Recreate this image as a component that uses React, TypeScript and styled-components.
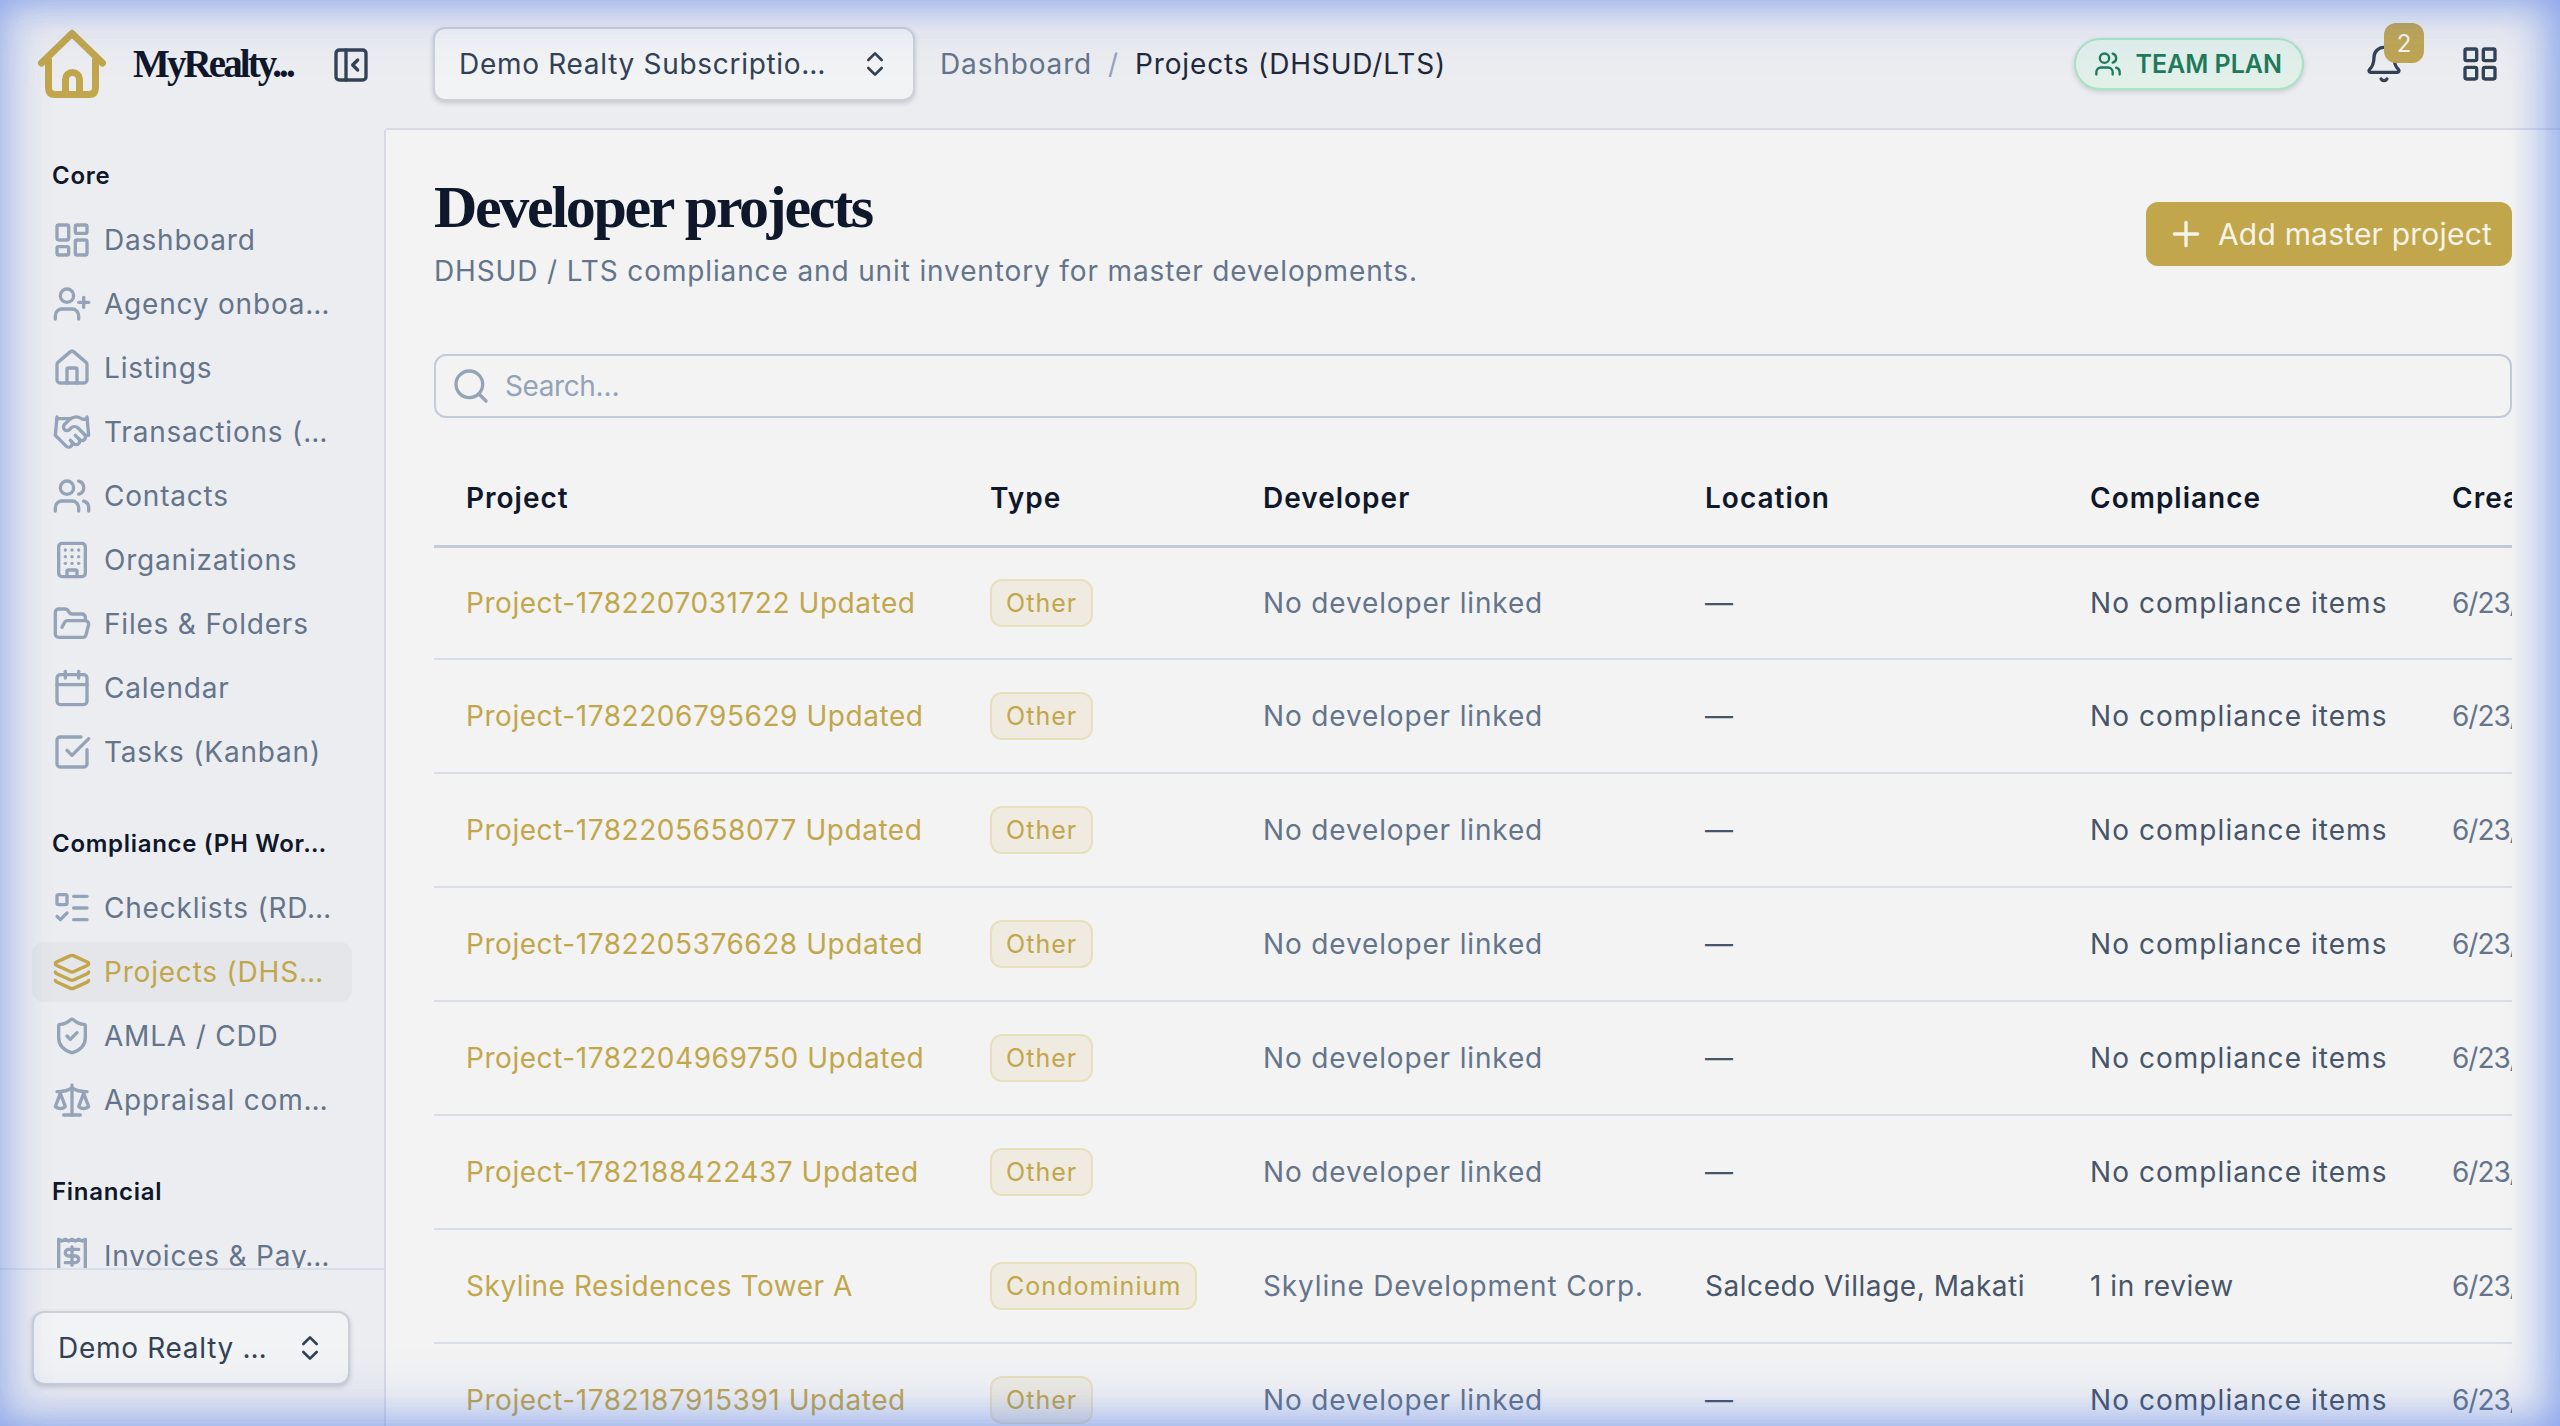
import React from 'react'
import styled, { createGlobalStyle } from 'styled-components'
import {
  Bell,
  Building,
  Calendar,
  ChevronsUpDown,
  FolderOpen,
  Handshake,
  House,
  Layers,
  LayoutDashboard,
  LayoutGrid,
  ListTodo,
  PanelLeftClose,
  Plus,
  Receipt,
  Scale,
  Search,
  ShieldCheck,
  SquareCheckBig,
  UserPlus,
  Users,
} from 'lucide-react'

const GlobalStyle = createGlobalStyle`
  html, body, #root {
    margin: 0;
    height: 100%;
    overflow: hidden;
  }
  body {
    font-family: Inter, "Noto Sans", sans-serif;
    background: #f3f3f3;
  }
  * {
    box-sizing: border-box;
  }
`

const Shell = styled.div`
  display: grid;
  grid-template-columns: 386px 1fr;
  grid-template-rows: 130px 1fr;
  height: 100vh;
  overflow: hidden;
`

const Glow = styled.div`
  position: fixed;
  inset: 0;
  pointer-events: none;
  box-shadow:
    inset 0 0 30px rgba(85, 125, 232, 0.2),
    inset 14px 0 32px rgba(85, 125, 232, 0.12),
    inset -18px 0 36px rgba(85, 125, 232, 0.32),
    inset 0 22px 56px rgba(85, 125, 232, 0.16),
    inset 0 -22px 56px rgba(85, 125, 232, 0.2);
`

const Brand = styled.div`
  display: flex;
  align-items: center;
  padding-left: 36px;
  background: #ecedf0;
`

const BrandName = styled.span`
  margin: 0 0 4px 25px;
  width: 198px;
  font-family: "Liberation Serif", serif;
  font-size: 39px;
  font-weight: 700;
  letter-spacing: -2.9px;
  color: #0f172a;
`

const CollapseButton = styled.span`
  display: flex;
  color: #334155;
`

const TopBar = styled.header`
  display: flex;
  align-items: center;
  padding: 0 60px 0 47px;
  background: #ecedf0;
  border-bottom: 2px solid #d8dae3;
`

const Select = styled.div<{ $width: number }>`
  display: flex;
  align-items: center;
  justify-content: space-between;
  width: ${({ $width }) => $width}px;
  height: 74px;
  padding: 0 22px 0 24px;
  border: 2px solid #cbd0d9;
  border-radius: 12px;
  background: #f2f3f4;
  box-shadow: 0 2px 5px rgba(15, 23, 42, 0.18);
  font-size: 28px;
  letter-spacing: 0.7px;
  color: #334155;
  white-space: nowrap;
  svg {
    flex: none;
    color: #334155;
  }
`

const Crumbs = styled.nav`
  display: flex;
  align-items: center;
  gap: 16px;
  margin-left: 25px;
  font-size: 28px;
  letter-spacing: 0.85px;
`

const Crumb = styled.span<{ $current?: boolean }>`
  color: ${({ $current }) => ($current ? '#1e293b' : '#64748b')};
`

const CrumbSep = styled.span`
  color: #94a3b8;
`

const TopActions = styled.div`
  display: flex;
  align-items: center;
  margin-left: auto;
`

const PlanPill = styled.div`
  display: flex;
  align-items: center;
  gap: 13px;
  height: 52px;
  padding: 0 20px 0 18px;
  border: 2.5px solid #a8e3c6;
  border-radius: 26px;
  background: #e2f0ea;
  box-shadow: 0 2px 5px rgba(15, 23, 42, 0.16);
  font-size: 25px;
  font-weight: 600;
  color: #1f7a5a;
`

const BellWrap = styled.div`
  position: relative;
  display: flex;
  margin-left: 60px;
  color: #334155;
`

const CountBadge = styled.span`
  position: absolute;
  top: -21px;
  left: 20px;
  width: 40px;
  height: 40px;
  display: flex;
  align-items: center;
  justify-content: center;
  border-radius: 12px;
  background: #bfa552;
  color: #f5f3ea;
  font-size: 24px;
`

const GridButton = styled.span`
  display: flex;
  margin-left: 56px;
  color: #334155;
`

const Sidebar = styled.aside`
  display: flex;
  flex-direction: column;
  min-height: 0;
  background: #ecedf0;
  border-right: 2px solid #d8dae3;
`

const NavScroll = styled.div`
  flex: 1;
  min-height: 0;
  overflow: hidden;
  padding: 31px 32px 0;
`

const NavSection = styled.section`
  margin-bottom: 47px;
`

const SectionLabel = styled.div`
  height: 30px;
  margin-bottom: 19px;
  padding-left: 20px;
  font-size: 24px;
  font-weight: 600;
  line-height: 30px;
  letter-spacing: 0.7px;
  color: #0f172a;
  white-space: nowrap;
`

const NavList = styled.div`
  display: flex;
  flex-direction: column;
  gap: 4px;
`

const NavItem = styled.a<{ $active?: boolean }>`
  display: flex;
  align-items: center;
  gap: 12px;
  height: 60px;
  padding-left: 20px;
  border-radius: 12px;
  background: ${({ $active }) => ($active ? '#e4e6e9' : 'transparent')};
  color: ${({ $active }) => ($active ? '#c1a64b' : '#64748b')};
  font-size: 28px;
  letter-spacing: 0.8px;
  white-space: nowrap;
  svg {
    flex: none;
    color: ${({ $active }) => ($active ? '#c1a64b' : '#94a3b8')};
  }
`

const SidebarFoot = styled.div`
  flex: none;
  height: 158px;
  padding: 41px 32px 0;
  border-top: 2px solid #d8dfeb;
`

const Main = styled.main`
  min-width: 0;
  min-height: 0;
  overflow: hidden;
  padding: 0 48px;
  background: #f3f3f3;
`

const PageHead = styled.div`
  display: flex;
  align-items: flex-start;
  justify-content: space-between;
  height: 224px;
  padding-top: 45px;
`

const PageTitle = styled.h1`
  margin: 0;
  font-family: "Liberation Serif", serif;
  font-size: 60px;
  font-weight: 700;
  line-height: 64px;
  letter-spacing: -2.3px;
  color: #0f172a;
`

const PageSub = styled.p`
  margin: 14px 0 0;
  font-size: 28px;
  line-height: 36px;
  letter-spacing: 0.87px;
  color: #64748b;
`

const AddButton = styled.button`
  display: flex;
  align-items: center;
  gap: 12px;
  height: 64px;
  margin-top: 27px;
  padding: 0 20px;
  border: 0;
  border-radius: 12px;
  background: #c1a64b;
  color: #f6f3e8;
  font-family: inherit;
  font-size: 30px;
  letter-spacing: 0.2px;
`

const SearchBox = styled.div`
  display: flex;
  align-items: center;
  gap: 14px;
  height: 64px;
  padding-left: 15px;
  border: 2px solid #c3cbd9;
  border-radius: 12px;
  color: #94a3b8;
  font-size: 28px;
  letter-spacing: -0.4px;
`

const TableWrap = styled.div`
  margin-top: 32px;
  overflow: hidden;
`

const Table = styled.table`
  width: 2299px;
  table-layout: fixed;
  border-collapse: separate;
  border-spacing: 0;
`

const HeadCell = styled.th<{ $width: number }>`
  width: ${({ $width }) => $width}px;
  height: 98px;
  padding: 0 32px;
  border-bottom: 3px solid #c3cbd9;
  text-align: left;
  font-size: 28px;
  font-weight: 600;
  letter-spacing: 1px;
  color: #0f172a;
  white-space: nowrap;
`

const Cell = styled.td<{ $tone?: 'muted' | 'strong' | 'link'; $spacing?: number }>`
  height: 114px;
  padding: 0 32px;
  border-bottom: 2px solid #d8dde7;
  font-size: 28px;
  letter-spacing: ${({ $spacing }) => $spacing ?? 0.55}px;
  white-space: nowrap;
  color: ${({ $tone }) =>
    $tone === 'link' ? '#c1a64b' : $tone === 'strong' ? '#475569' : '#64748b'};
  tr:first-child > & {
    height: 112px;
  }
`

const TypeBadge = styled.span`
  display: inline-flex;
  align-items: center;
  height: 48px;
  padding: 0 14px;
  border: 2px solid #e8dfbd;
  border-radius: 12px;
  background: #efebe0;
  color: #c1a64b;
  font-size: 25px;
  letter-spacing: 1.05px;
`

const LogoMark = () => (
  <svg
    width="72"
    height="72"
    viewBox="0 0 72 72"
    fill="none"
    stroke="#c1a64b"
    strokeWidth="7"
    strokeLinecap="round"
    strokeLinejoin="round"
  >
    <path d="M5.5 34 L36 4.5 L66.5 34" />
    <path d="M12.5 31 V59 Q12.5 65.5 19 65.5 H53 Q59.5 65.5 59.5 59 V31" />
    <path d="M29.5 65 V50.5 A7 7 0 0 1 36.5 43.5 A7 7 0 0 1 43.5 50.5 V65" />
  </svg>
)

const navSections = [
  {
    label: 'Core',
    items: [
      { icon: LayoutDashboard, text: 'Dashboard' },
      { icon: UserPlus, text: 'Agency onboa…' },
      { icon: House, text: 'Listings' },
      { icon: Handshake, text: 'Transactions (…' },
      { icon: Users, text: 'Contacts' },
      { icon: Building, text: 'Organizations' },
      { icon: FolderOpen, text: 'Files & Folders' },
      { icon: Calendar, text: 'Calendar' },
      { icon: SquareCheckBig, text: 'Tasks (Kanban)' },
    ],
  },
  {
    label: 'Compliance (PH Wor…',
    items: [
      { icon: ListTodo, text: 'Checklists (RD…' },
      { icon: Layers, text: 'Projects (DHS…', active: true },
      { icon: ShieldCheck, text: 'AMLA / CDD' },
      { icon: Scale, text: 'Appraisal com…' },
    ],
  },
  {
    label: 'Financial',
    items: [{ icon: Receipt, text: 'Invoices & Pay…' }],
  },
]

const columns = [
  { title: 'Project', width: 524 },
  { title: 'Type', width: 273 },
  { title: 'Developer', width: 442 },
  { title: 'Location', width: 385 },
  { title: 'Compliance', width: 362 },
  { title: 'Created', width: 313 },
]

const emptyProject = (name: string) => ({
  name,
  type: 'Other',
  developer: 'No developer linked',
  location: '—',
  compliance: 'No compliance items',
})

const rows = [
  emptyProject('Project-1782207031722 Updated'),
  emptyProject('Project-1782206795629 Updated'),
  emptyProject('Project-1782205658077 Updated'),
  emptyProject('Project-1782205376628 Updated'),
  emptyProject('Project-1782204969750 Updated'),
  emptyProject('Project-1782188422437 Updated'),
  {
    name: 'Skyline Residences Tower A',
    type: 'Condominium',
    developer: 'Skyline Development Corp.',
    location: 'Salcedo Village, Makati',
    compliance: '1 in review',
  },
  emptyProject('Project-1782187915391 Updated'),
]

export default function App() {
  return (
    <>
      <GlobalStyle />
      <Shell>
        <Brand>
          <LogoMark />
          <BrandName>MyRealty...</BrandName>
          <CollapseButton>
            <PanelLeftClose size={40} />
          </CollapseButton>
        </Brand>
        <TopBar>
          <Select $width={482}>
            Demo Realty Subscriptio…
            <ChevronsUpDown size={32} />
          </Select>
          <Crumbs>
            <Crumb>Dashboard</Crumb>
            <CrumbSep>/</CrumbSep>
            <Crumb $current>Projects (DHSUD/LTS)</Crumb>
          </Crumbs>
          <TopActions>
            <PlanPill>
              <Users size={28} />
              TEAM PLAN
            </PlanPill>
            <BellWrap>
              <Bell size={40} />
              <CountBadge>2</CountBadge>
            </BellWrap>
            <GridButton>
              <LayoutGrid size={40} />
            </GridButton>
          </TopActions>
        </TopBar>
        <Sidebar>
          <NavScroll>
            {navSections.map((section) => (
              <NavSection key={section.label}>
                <SectionLabel>{section.label}</SectionLabel>
                <NavList>
                  {section.items.map((item) => (
                    <NavItem key={item.text} $active={'active' in item}>
                      <item.icon size={40} />
                      {item.text}
                    </NavItem>
                  ))}
                </NavList>
              </NavSection>
            ))}
          </NavScroll>
          <SidebarFoot>
            <Select $width={318}>
              Demo Realty …
              <ChevronsUpDown size={32} />
            </Select>
          </SidebarFoot>
        </Sidebar>
        <Main>
          <PageHead>
            <div>
              <PageTitle>Developer projects</PageTitle>
              <PageSub>DHSUD / LTS compliance and unit inventory for master developments.</PageSub>
            </div>
            <AddButton>
              <Plus size={40} />
              Add master project
            </AddButton>
          </PageHead>
          <SearchBox>
            <Search size={40} />
            Search…
          </SearchBox>
          <TableWrap>
            <Table>
              <thead>
                <tr>
                  {columns.map((col) => (
                    <HeadCell key={col.title} $width={col.width}>
                      {col.title}
                    </HeadCell>
                  ))}
                </tr>
              </thead>
              <tbody>
                {rows.map((row) => (
                  <tr key={row.name}>
                    <Cell $tone="link">{row.name}</Cell>
                    <Cell>
                      <TypeBadge>{row.type}</TypeBadge>
                    </Cell>
                    <Cell $spacing={0.85}>{row.developer}</Cell>
                    <Cell $tone="strong">{row.location}</Cell>
                    <Cell $tone="strong" $spacing={row.compliance.startsWith('No') ? 1.05 : 0.55}>
                      {row.compliance}
                    </Cell>
                    <Cell $spacing={-1}>6/23/2026</Cell>
                  </tr>
                ))}
              </tbody>
            </Table>
          </TableWrap>
        </Main>
      </Shell>
      <Glow />
    </>
  )
}
